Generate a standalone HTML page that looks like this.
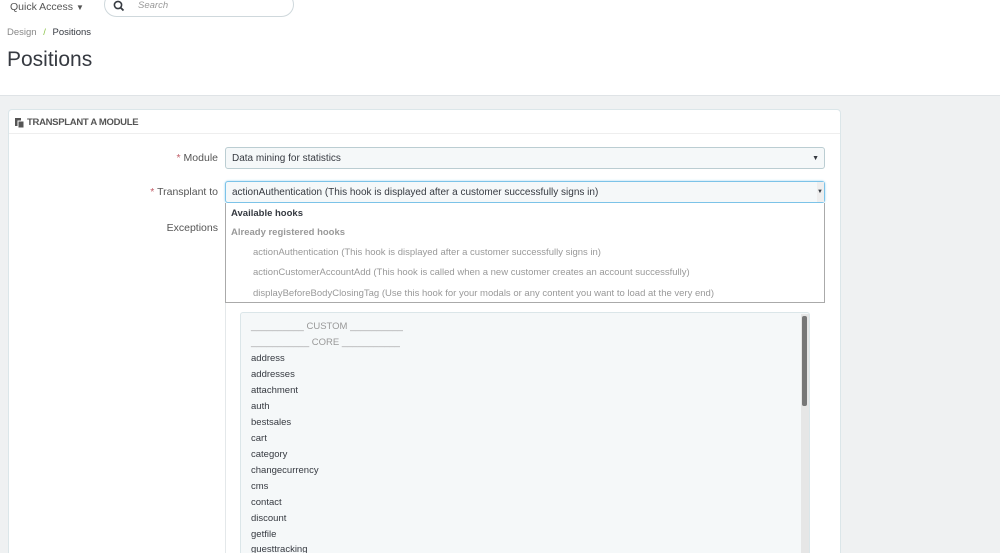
<!DOCTYPE html>
<html><head><style>
*{box-sizing:border-box;margin:0;padding:0}
html,body{width:1000px;height:553px;overflow:hidden}
body{background:#eff1f2;font-family:"Liberation Sans",sans-serif;color:#363a41;position:relative}
.top{position:absolute;left:0;top:0;width:1000px;height:96px;background:#fff;border-bottom:1px solid #dfe3e6}
.abs{position:absolute}
.panel{position:absolute;left:8px;top:109px;width:833px;height:444px;background:#fff;border:1px solid #dbe6e9;border-bottom:none;border-radius:4px 4px 0 0}
.sel{position:absolute;background:#f5f8f9;border:1px solid #bbcdd2;border-radius:3px;font-size:10px;color:#363a41;padding-left:6px;line-height:21px}
.lbl{position:absolute;font-size:10.5px;color:#555;text-align:right}
.star{color:#c05c67}
.li{position:absolute;left:251px;font-size:9.5px;color:#363a41}
</style></head><body>
<div class="top">
 <div class="abs" style="left:10px;top:1px;font-size:10.5px;color:#555">Quick Access <span style="font-size:8px">&#9660;</span></div>
 <div class="abs" style="left:104px;top:-8px;width:190px;height:25px;border:1px solid #cfd8dc;border-radius:13px"></div>
 <svg class="abs" style="left:113px;top:0" width="12" height="12" viewBox="0 0 12 12"><circle cx="5" cy="5" r="3.6" stroke="#363a41" stroke-width="1.6" fill="none"/><path d="M7.6 7.6 L10.5 10.5" stroke="#363a41" stroke-width="1.8"/></svg>
 <div class="abs" style="left:138px;top:0;font-size:9.5px;font-style:italic;color:#999">Search</div>
 <div class="abs" style="left:7px;top:27px;font-size:9.5px;color:#888">Design <span style="color:#8bc34a;margin:0 4px">/</span> <span style="color:#363a41">Positions</span></div>
 <div class="abs" style="left:7px;top:48px;font-size:21px;color:#363a41">Positions</div>
</div>
<div class="panel">
 <div class="abs" style="left:0;top:0;width:831px;height:24px;border-bottom:1px solid #eee"></div>
 <svg class="abs" style="left:6px;top:8px" width="10" height="10" viewBox="0 0 10 10"><rect x="0" y="0" width="6" height="8" fill="#555"/><rect x="3" y="3" width="6" height="7" fill="#555" stroke="#fff" stroke-width="1"/></svg>
 <div class="abs" style="left:18px;top:7px;font-size:9.5px;font-weight:bold;color:#555;letter-spacing:-0.3px">TRANSPLANT A MODULE</div>
</div>
<div class="lbl" style="left:100px;top:152px;width:118px"><span class="star">*</span> Module</div>
<div class="sel" style="left:225px;top:147px;width:600px;height:22px">Data mining for statistics<span class="abs" style="right:5px;top:0;font-size:7px">&#9660;</span></div>
<div class="lbl" style="left:100px;top:186px;width:118px"><span class="star">*</span> Transplant to</div>
<div class="sel" style="left:225px;top:181px;width:600px;height:22px;border-color:#7cc3e8;box-shadow:0 0 2px #9cd3f0">actionAuthentication (This hook is displayed after a customer successfully signs in)<span class="abs" style="right:0;top:0;width:7px;height:20px;background:#eee;font-size:6px;line-height:20px">&#9660;</span></div>
<div class="lbl" style="left:100px;top:222px;width:118px">Exceptions</div>
<div class="abs" style="left:225px;top:303px;width:1px;height:250px;background:#e4e8ea"></div>
<div class="abs" style="left:240px;top:312px;width:570px;height:241px;background:#f5f8f9;border:1px solid #dbe6e9;border-bottom:none;border-radius:3px 3px 0 0"></div>
<div class="abs" style="left:801px;top:314px;width:8px;height:239px;background:#e6e6e6"></div>
<div class="abs" style="left:802px;top:316px;width:5px;height:90px;background:#777;border-radius:2px"></div>
<div class="abs" style="left:225px;top:203px;width:600px;height:100px;background:#fff;border:1px solid #aaa;border-top:none"></div>
<div class="abs" style="left:231px;top:208px;font-size:9.5px;font-weight:bold;color:#363a41">Available hooks</div>
<div class="abs" style="left:231px;top:227px;font-size:9.5px;font-weight:bold;color:#999">Already registered hooks</div>
<div class="abs" style="left:253px;top:247px;font-size:9.5px;color:#999">actionAuthentication (This hook is displayed after a customer successfully signs in)</div>
<div class="abs" style="left:253px;top:267px;font-size:9.5px;color:#999">actionCustomerAccountAdd (This hook is called when a new customer creates an account successfully)</div>
<div class="abs" style="left:253px;top:288px;font-size:9.5px;color:#999">displayBeforeBodyClosingTag (Use this hook for your modals or any content you want to load at the very end)</div>
<div class="li" style="top:321px;color:#999">__________ CUSTOM __________</div>
<div class="li" style="top:337px;color:#999">___________ CORE ___________</div>
<div class="li" style="top:353px">address</div>
<div class="li" style="top:369px">addresses</div>
<div class="li" style="top:385px">attachment</div>
<div class="li" style="top:401px">auth</div>
<div class="li" style="top:417px">bestsales</div>
<div class="li" style="top:433px">cart</div>
<div class="li" style="top:449px">category</div>
<div class="li" style="top:465px">changecurrency</div>
<div class="li" style="top:481px">cms</div>
<div class="li" style="top:497px">contact</div>
<div class="li" style="top:513px">discount</div>
<div class="li" style="top:529px">getfile</div>
<div class="li" style="top:544px">guesttracking</div>
</body></html>
